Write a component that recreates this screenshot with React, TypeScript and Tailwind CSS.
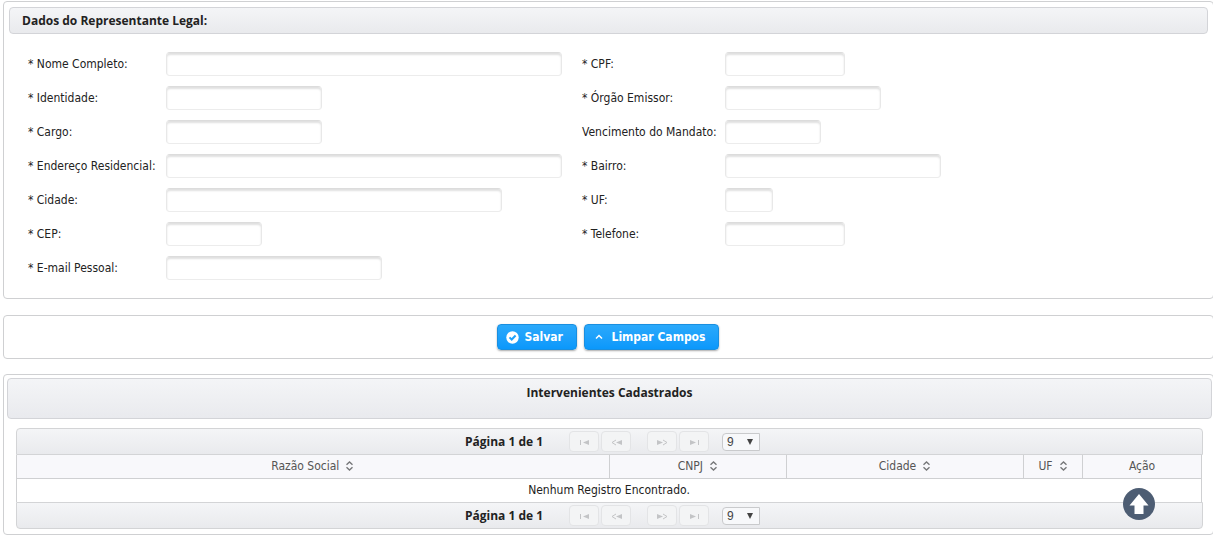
import React from 'react';

type Field = { id: string; label: string; width: string };

const leftFields: Field[] = [
  { id: 'nome', label: '* Nome Completo:', width: 'w-[396px]' },
  { id: 'identidade', label: '* Identidade:', width: 'w-[156px]' },
  { id: 'cargo', label: '* Cargo:', width: 'w-[156px]' },
  { id: 'endereco', label: '* Endereço Residencial:', width: 'w-[396px]' },
  { id: 'cidade', label: '* Cidade:', width: 'w-[336px]' },
  { id: 'cep', label: '* CEP:', width: 'w-24' },
  { id: 'email', label: '* E-mail Pessoal:', width: 'w-[216px]' },
];

const rightFields: Field[] = [
  { id: 'cpf', label: '* CPF:', width: 'w-[120px]' },
  { id: 'orgao', label: '* Órgão Emissor:', width: 'w-[156px]' },
  { id: 'vencimento', label: 'Vencimento do Mandato:', width: 'w-24' },
  { id: 'bairro', label: '* Bairro:', width: 'w-[216px]' },
  { id: 'uf', label: '* UF:', width: 'w-12' },
  { id: 'telefone', label: '* Telefone:', width: 'w-[120px]' },
];

function FieldColumn({ fields, labelWidth }: { fields: Field[]; labelWidth: string }) {
  return (
    <div className="flex flex-col gap-[10px]">
      {fields.map((f) => (
        <div key={f.id} className="flex h-6 items-center">
          <label htmlFor={f.id} className={`${labelWidth} shrink-0 whitespace-nowrap`}>
            {f.label}
          </label>
          <input
            id={f.id}
            type="text"
            className={`${f.width} h-6 rounded border border-t-[#dcdcdc] border-x-[#e8e8e8] border-b-[#ececec] bg-white px-1.5 shadow-[inset_0_2px_2px_#e0e0e0] outline-none`}
          />
        </div>
      ))}
    </div>
  );
}

const pagerIcons = {
  first: (
    <>
      <path d="M0 1h1v5H0z" />
      <path d="M9 1v5L3 3.5z" />
    </>
  ),
  prev: (
    <>
      <path d="M5 1L1 3.5L5 6" fill="none" stroke="currentColor" />
      <path d="M11 1v5L5 3.5z" />
    </>
  ),
  next: (
    <>
      <path d="M6 1L10 3.5L6 6" fill="none" stroke="currentColor" />
      <path d="M0 1v5L6 3.5z" />
    </>
  ),
  last: (
    <>
      <path d="M8 1h1v5H8z" />
      <path d="M0 1v5L6 3.5z" />
    </>
  ),
};

function PagerButton({ icon, label }: { icon: keyof typeof pagerIcons; label: string }) {
  const wide = icon === 'prev' || icon === 'next';
  return (
    <button
      type="button"
      aria-label={label}
      disabled
      className="flex h-[21px] w-[30px] items-center justify-center rounded border border-[#e3e4e6] bg-[#f3f4f5] pt-px text-[#c3c4c6]"
    >
      <svg width={wide ? 11 : 9} height="7" viewBox={wide ? '0 0 11 7' : '0 0 9 7'} fill="currentColor">
        {pagerIcons[icon]}
      </svg>
    </button>
  );
}

function Paginator({ position }: { position: 'top' | 'bottom' }) {
  return (
    <div
      className={`flex h-[27px] items-center justify-center border border-[#d3d4d6] bg-linear-to-b from-[#f4f5f7] to-[#e9eaed] pl-[6px] ${
        position === 'top' ? 'rounded-t' : 'rounded-b'
      }`}
    >
      <span className="mr-[26px] font-['Open_Sans',sans-serif] font-bold">Página 1 de 1</span>
      <div className="flex gap-[2px]">
        <PagerButton icon="first" label="Primeira página" />
        <PagerButton icon="prev" label="Página anterior" />
      </div>
      <div className="ml-4 flex gap-[2px]">
        <PagerButton icon="next" label="Próxima página" />
        <PagerButton icon="last" label="Última página" />
      </div>
      <div className="relative ml-[13px] flex">
        <select
          aria-label="Registros por página"
          className="h-[18px] w-[38px] appearance-none rounded-l border border-[#c9cacc] bg-[#f7f8fa] pl-1 font-['Liberation_Sans',sans-serif] text-[12px] leading-4 text-[#444]"
        >
          <option>9</option>
        </select>
        <svg className="pointer-events-none absolute top-[6px] right-[7px]" width="6" height="6" viewBox="0 0 7 7" fill="#444">
          <path d="M0 0h7L3.5 7z" />
        </svg>
      </div>
    </div>
  );
}

const columns = [
  { name: 'Razão Social', width: 'w-[50%]', sortable: true },
  { name: 'CNPJ', width: 'w-[15%]', sortable: true },
  { name: 'Cidade', width: 'w-[20%]', sortable: true },
  { name: 'UF', width: 'w-[5%]', sortable: true },
  { name: 'Ação', width: 'w-[10%]', sortable: false },
];

function SortIcon() {
  return (
    <svg className="ml-[6px]" width="9" height="10" viewBox="0 0 9 10" fill="none" stroke="#77787a" strokeWidth="1.4">
      <path d="M1.5 3.8L4.5 1L7.5 3.8M1.5 6.2L4.5 9L7.5 6.2" />
    </svg>
  );
}

const blueButton =
  'flex h-[26px] items-center rounded border border-[#1a8fe0] bg-linear-to-b from-[#2aa9fb] to-[#0a98fb] font-bold text-white shadow-[0_1px_2px_#aaa]';

const panel = 'ml-[3px] -mr-px rounded border border-[#cfd0d2] bg-white';

export default function App() {
  return (
    <main className="relative overflow-hidden bg-white pt-px pb-1 font-['DejaVu_Sans_Condensed','DejaVu_Sans',sans-serif] text-[12px] leading-4 text-[#222]">
      <form className="flex flex-col" onSubmit={(e) => e.preventDefault()}>
        <section className={`${panel} px-[5px] pt-[5px] pb-[18px]`}>
          <h2 className="flex h-[27px] items-center rounded border border-[#d3d4d8] bg-linear-to-b from-[#f4f5f7] to-[#e9eaed] px-3 font-['Open_Sans',sans-serif] font-bold">
            Dados do Representante Legal:
          </h2>
          <div className="mt-[18px] ml-[19px] flex gap-5">
            <div className="w-[534px] shrink-0">
              <FieldColumn fields={leftFields} labelWidth="w-[138px]" />
            </div>
            <FieldColumn fields={rightFields} labelWidth="w-[143px]" />
          </div>
        </section>

        <div className={`${panel} mt-4 flex h-11 items-center justify-center gap-[7px] pr-[2px]`}>
          <button type="submit" className={`${blueButton} w-20 pl-2`}>
            <svg className="mr-[6px]" width="13" height="13" viewBox="0 0 13 13">
              <circle cx="6.5" cy="6.5" r="6.2" fill="#fff" />
              <path d="M3.5 6.4L5.7 8.5L9.6 4.5" fill="none" stroke="#1ea2fb" strokeWidth="2" />
            </svg>
            Salvar
          </button>
          <button type="reset" className={`${blueButton} w-[135px] pl-[10px]`}>
            <svg className="mr-[9px]" width="8" height="6" viewBox="0 0 8 6" fill="none" stroke="#fff" strokeWidth="1.5">
              <path d="M1 4.5L4 1.5L7 4.5" />
            </svg>
            Limpar Campos
          </button>
        </div>
      </form>

      <section className={`${panel} mt-[15px] px-[3px] pt-[3px] pb-[5px]`}>
        <h2 className="mr-[-2px] flex h-[41px] justify-center rounded border border-[#d3d4d8] bg-linear-to-b from-[#f4f5f7] to-[#e9eaee] pt-[6px] font-['Open_Sans',sans-serif] font-bold">
          Intervenientes Cadastrados
        </h2>
        <div className="mt-[9px] mr-[7px] ml-[9px]">
          <Paginator position="top" />
          <div className="mr-px border-x border-[#cfd0d2]">
            <table className="w-full table-fixed border-collapse">
              <thead>
                <tr className="h-[23px] border-b border-[#cfd0d2] bg-[#f8f8fb] text-[#555]">
                  {columns.map((c) => (
                    <th key={c.name} className={`${c.width} border-r border-[#cfd0d2] p-0 font-normal last:border-r-0`}>
                      <span className="flex items-center justify-center">
                        {c.name}
                        {c.sortable && <SortIcon />}
                      </span>
                    </th>
                  ))}
                </tr>
              </thead>
              <tbody>
                <tr className="h-6">
                  <td colSpan={5} className="p-0 text-center">
                    Nenhum Registro Encontrado.
                  </td>
                </tr>
              </tbody>
            </table>
          </div>
          <Paginator position="bottom" />
        </div>
      </section>

      <a href="#root" aria-label="Voltar ao topo" className="absolute right-[58px] bottom-[19px]">
        <svg width="32" height="32" viewBox="0 0 32 32">
          <circle cx="16" cy="16" r="16" fill="#4d5d73" />
          <path d="M16 6L25.5 17.5H20.5V26H11.5V17.5H6.5z" fill="#fff" />
        </svg>
      </a>
    </main>
  );
}
